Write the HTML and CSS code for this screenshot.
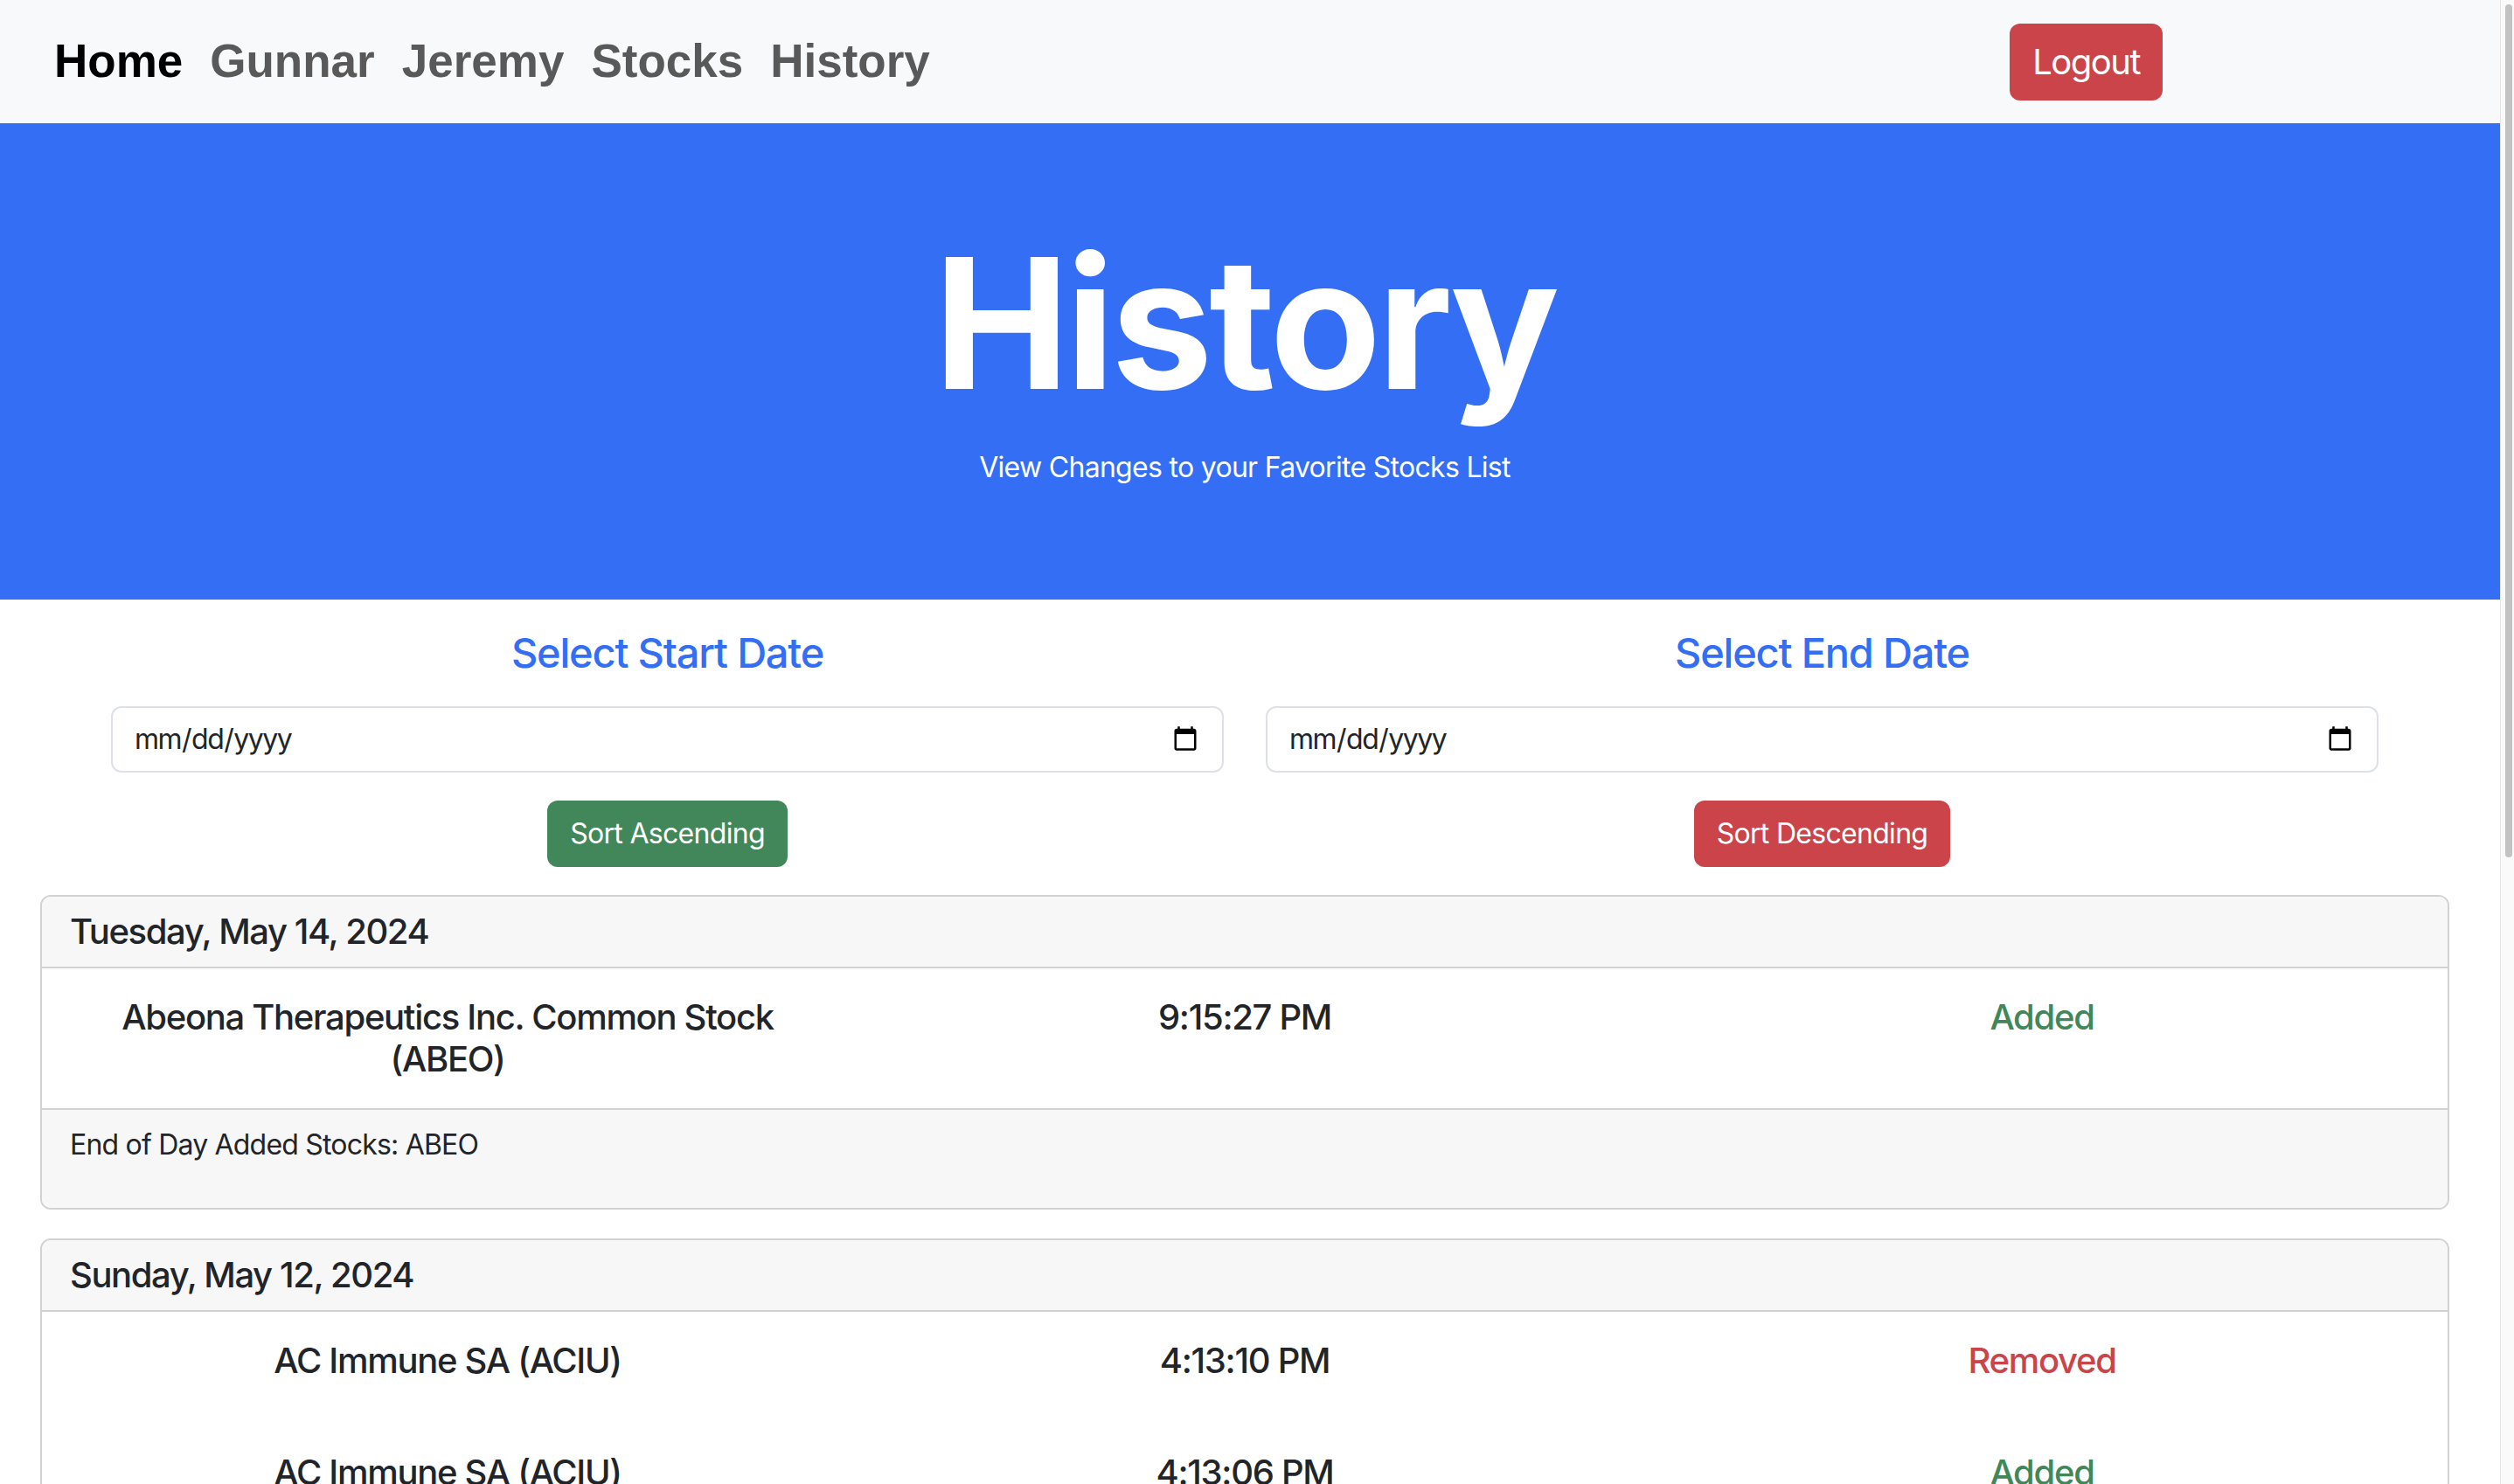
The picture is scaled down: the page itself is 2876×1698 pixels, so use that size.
FILE: index.html
```html
<!DOCTYPE html>
<html lang="en">
<head>
<meta charset="utf-8">
<title>History</title>
<link rel="stylesheet" href="styles.css">
</head>
<body>
<div class="window">
  <div class="viewport">
    <nav class="navbar">
      <div class="nav-links">
        <a class="nav-link active" href="#">Home</a>
        <a class="nav-link" href="#">Gunnar</a>
        <a class="nav-link" href="#">Jeremy</a>
        <a class="nav-link" href="#">Stocks</a>
        <a class="nav-link" href="#">History</a>
      </div>
      <button class="btn btn-danger btn-logout" type="button">Logout</button>
    </nav>

    <header class="hero">
      <h1 class="hero-title">History</h1>
      <p class="hero-sub">View Changes to your Favorite Stocks List</p>
    </header>

    <main class="content">
      <div class="filters">
        <div class="filter-col">
          <h4 class="filter-title">Select Start Date</h4>
          <input class="date-input" type="date">
          <button class="btn btn-success" type="button">Sort Ascending</button>
        </div>
        <div class="filter-col">
          <h4 class="filter-title">Select End Date</h4>
          <input class="date-input" type="date">
          <button class="btn btn-danger" type="button">Sort Descending</button>
        </div>
      </div>

      <section class="card">
        <div class="card-header"><h5 class="card-date">Tuesday, May 14, 2024</h5></div>
        <div class="card-body">
          <div class="entry">
            <div class="cell">Abeona Therapeutics Inc. Common Stock (ABEO)</div>
            <div class="cell">9:15:27 PM</div>
            <div class="cell added">Added</div>
          </div>
        </div>
        <div class="card-footer"><p class="summary">End of Day Added Stocks: ABEO</p></div>
      </section>

      <section class="card">
        <div class="card-header"><h5 class="card-date">Sunday, May 12, 2024</h5></div>
        <div class="card-body">
          <div class="entry">
            <div class="cell">AC Immune SA (ACIU)</div>
            <div class="cell">4:13:10 PM</div>
            <div class="cell removed">Removed</div>
          </div>
          <div class="entry">
            <div class="cell">AC Immune SA (ACIU)</div>
            <div class="cell">4:13:06 PM</div>
            <div class="cell added">Added</div>
          </div>
        </div>
      </section>
    </main>
  </div>
  <div class="scrollbar"><div class="scroll-thumb"></div></div>
</div>
</body>
</html>
```

FILE: styles.css
```css
html, body {
  margin: 0;
  height: 100%;
  overflow: hidden;
}

body {
  font-family: Inter, "Noto Sans", sans-serif;
  font-size: 32px;
  line-height: 1.5;
  color: #212529;
  background: #ffffff;
}

.window {
  display: flex;
  height: 100vh;
}

.viewport {
  flex: 1;
  min-width: 0;
  overflow: hidden;
}

.scrollbar {
  width: 16px;
  flex: none;
  box-sizing: border-box;
  background: #fafafa;
  border-left: 1px solid #e6e6e6;
  padding: 5px 2px 0 5px;
}

.scroll-thumb {
  height: 976px;
  background: #c2c2c2;
  border-radius: 5px;
}

/* Navbar */
.navbar {
  display: flex;
  align-items: center;
  height: 141px;
  box-sizing: border-box;
  padding: 0 386px 0 46px;
  background: #f8f9fa;
}

.nav-links {
  display: flex;
  flex: 1;
}

.nav-link {
  font-family: "Liberation Sans", Arial, sans-serif;
  font-weight: 700;
  font-size: 53px;
  line-height: 1.15;
  color: #595959;
  text-decoration: none;
  padding: 0 15.5px;
}

.nav-link:first-child {
  padding-left: 16px;
}

.nav-link.active {
  color: #000000;
}

/* Buttons */
.btn {
  font-family: Inter, "Noto Sans", sans-serif;
  font-size: 32px;
  line-height: 48px;
  letter-spacing: -0.7px;
  padding: 12px 24px;
  border: 2px solid transparent;
  border-radius: 12px;
  color: #ffffff;
  cursor: pointer;
}

.btn-danger {
  background: #cb444a;
}

.btn-success {
  background: #418759;
}

.btn-logout {
  font-size: 40px;
  line-height: 60px;
  letter-spacing: -1.5px;
}

/* Hero */
.hero {
  background: #336ef4;
  color: #ffffff;
  text-align: center;
  padding: 104px 12px 127px 0;
}

.hero-title {
  margin: 0 0 16px;
  font-size: 208px;
  font-weight: 700;
  line-height: 1.2;
  letter-spacing: -4.5px;
}

.hero-sub {
  margin: 0;
  font-size: 32px;
  line-height: 48px;
  letter-spacing: -0.7px;
}

/* Content */
.content {
  padding: 32px 58px 0 46px;
}

.filters {
  display: grid;
  grid-template-columns: 1fr 1fr;
  margin: 0 57px 32px;
}

.filter-col {
  display: flex;
  flex-direction: column;
  align-items: center;
  padding: 0 24px;
}

.filter-title {
  margin: 0 0 32px;
  font-size: 47px;
  font-weight: 500;
  line-height: 58px;
  letter-spacing: -1.2px;
  color: #336ef4;
}

.date-input {
  box-sizing: border-box;
  width: 100%;
  height: 76px;
  margin: 0 0 32px;
  padding: 12px 24px;
  font-family: Inter, "Noto Sans", sans-serif;
  font-size: 32px;
  line-height: 48px;
  letter-spacing: -1.5px;
  color: #212529;
  background: #ffffff;
  border: 2px solid #dee2e6;
  border-radius: 12px;
}

/* Cards */
.card {
  border: 2px solid #d2d2d2;
  border-radius: 12px;
  margin-bottom: 33px;
  overflow: hidden;
}

.card-header {
  background: #f7f7f7;
  border-bottom: 2px solid #d2d2d2;
  padding: 16px 32px;
}

.card-date {
  margin: 0;
  font-size: 40px;
  font-weight: 500;
  line-height: 48px;
  letter-spacing: -1.4px;
}

.card-body {
  display: flex;
  flex-direction: column;
  gap: 80px;
  padding: 32px;
}

.entry {
  display: grid;
  grid-template-columns: repeat(3, 1fr);
  margin: 0 -24px;
}

.cell {
  padding: 0 24px;
  text-align: center;
  font-size: 40px;
  font-weight: 500;
  line-height: 48px;
  letter-spacing: -1.3px;
}

.added {
  color: #418759;
}

.removed {
  color: #cb444a;
}

.card-footer {
  background: #f7f7f7;
  border-top: 2px solid #d2d2d2;
  padding: 16px 32px;
}

.summary {
  margin: 0 0 32px;
  font-size: 32px;
  line-height: 48px;
  letter-spacing: -0.8px;
}
```
